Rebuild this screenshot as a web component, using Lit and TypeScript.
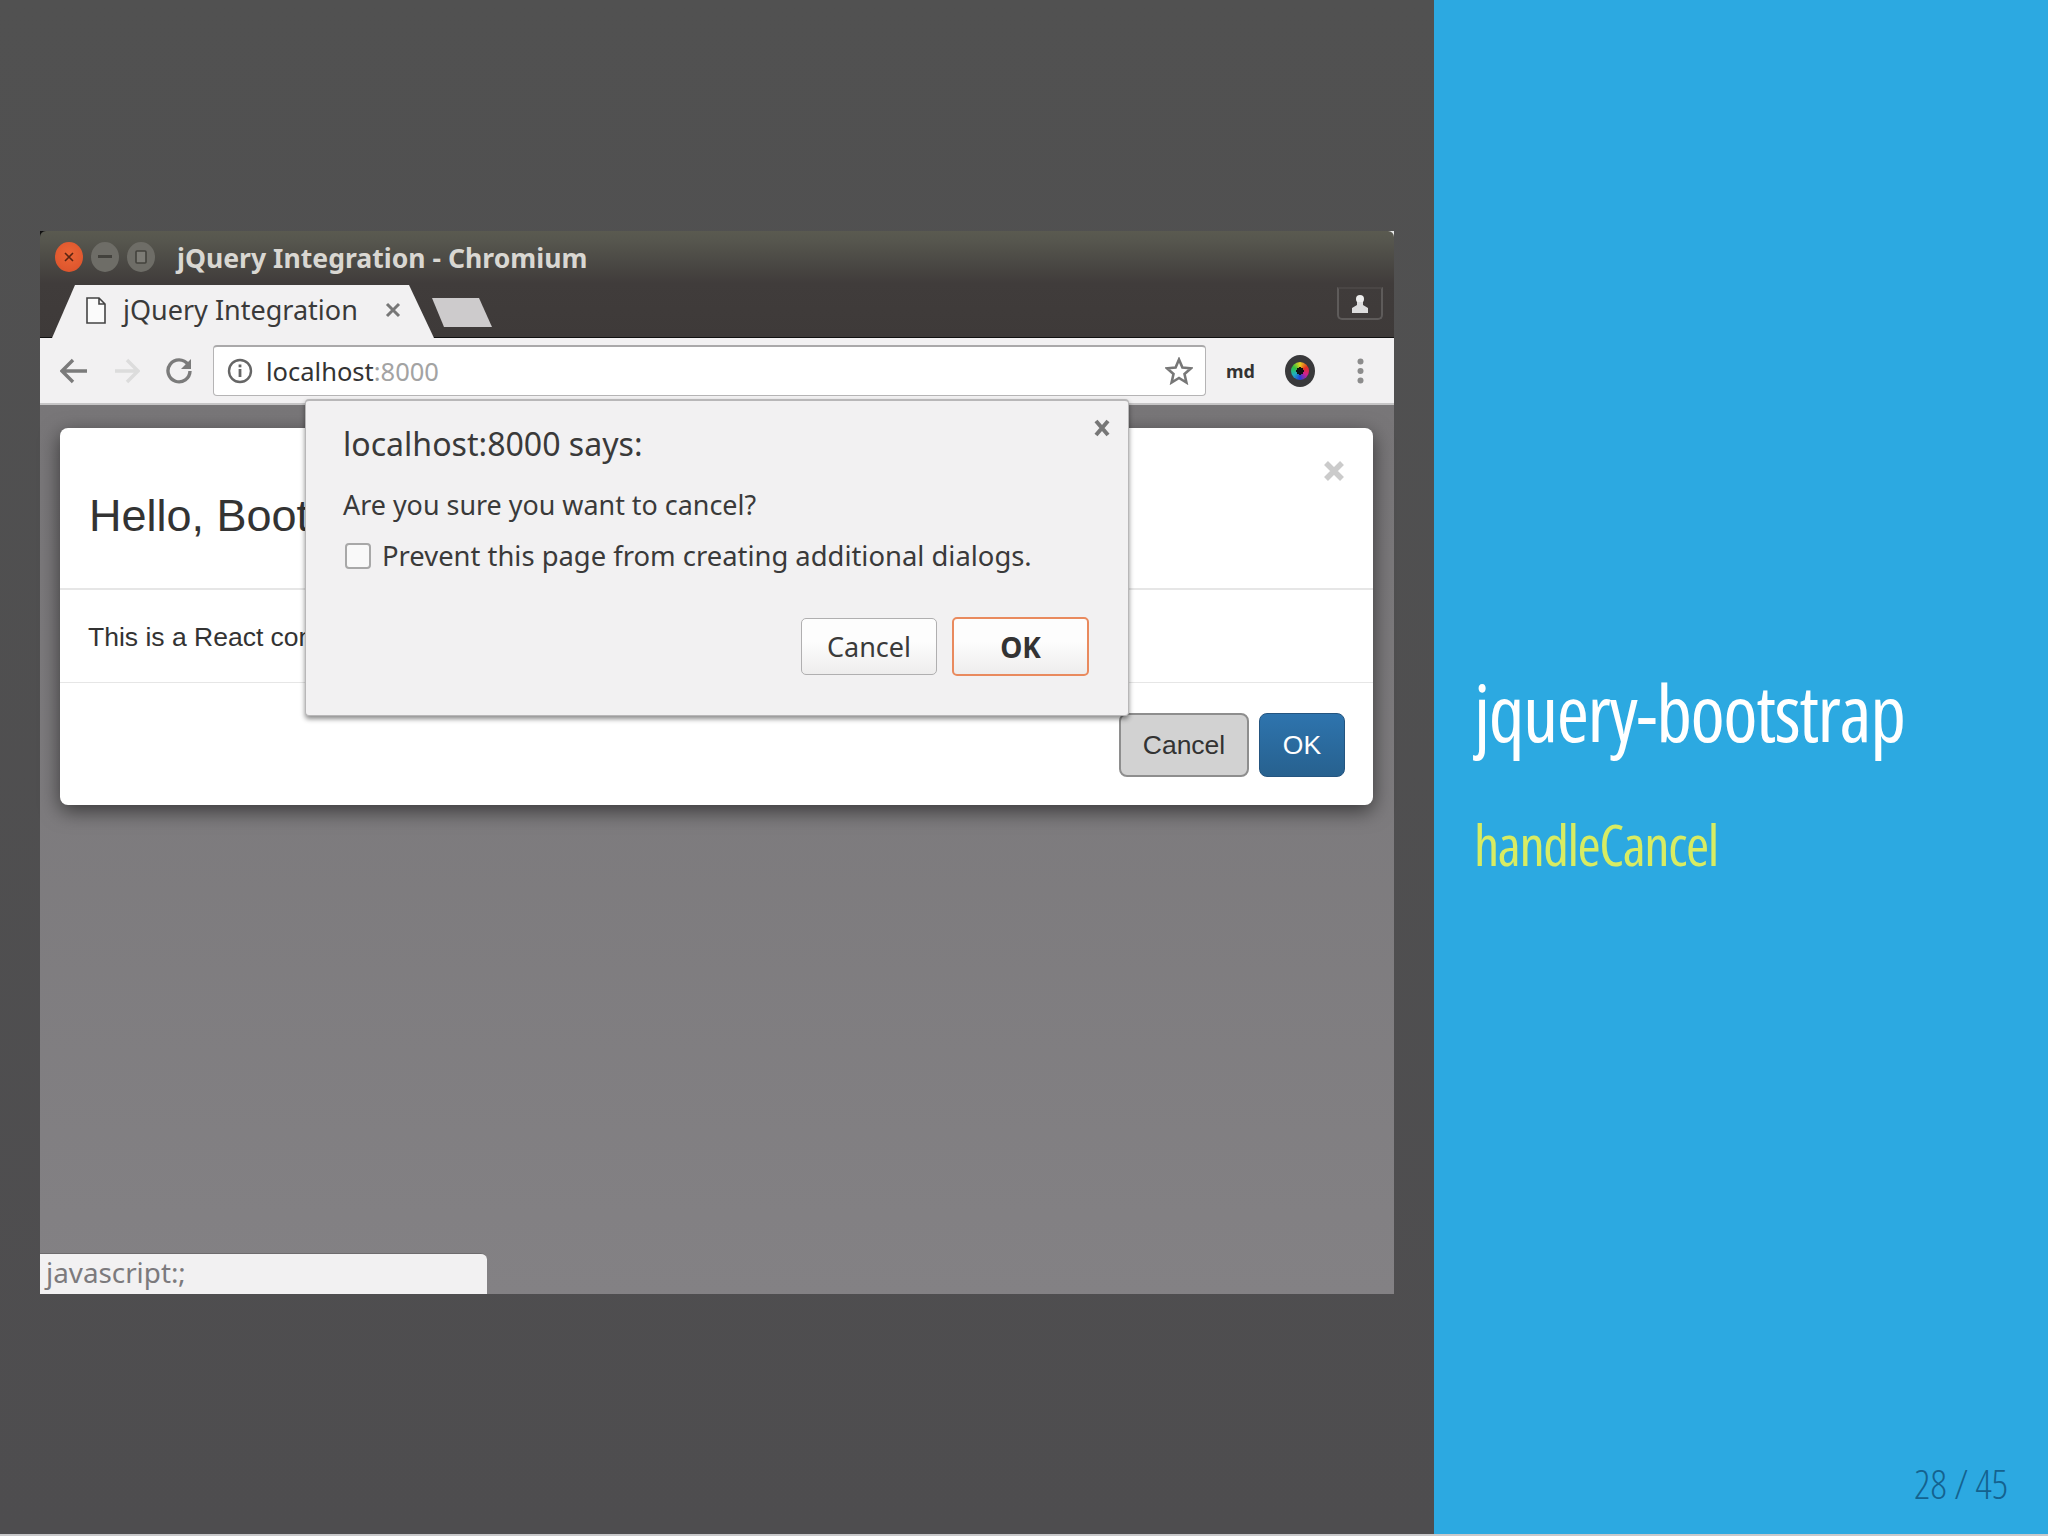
import { LitElement, html, css, svg } from "lit";
import { customElement } from "lit/decorators.js";

@customElement("app-root")
export class AppRoot extends LitElement {
  static styles = css`
    :host { display: block; width: 2048px; height: 1536px; overflow: hidden; font-family: "Noto Sans", sans-serif; background: #c9c9cb; }
    .slide { display: flex; width: 2048px; height: 1534px; }
    .left { width: 1434px; height: 1534px; box-sizing: border-box; padding: 231px 40px 0; background: linear-gradient(180deg,#515151,#4e4d4f); }
    .right { position: relative; flex: 1; height: 1534px; box-sizing: border-box; background: #2ca9e1; padding: 662px 0 0 40px; display: flex; flex-direction: column; }
    h1 { margin: 0; font: 400 78px/100px "Open Sans", sans-serif; font-stretch: 75%; letter-spacing: -1.45px; color: #fff; white-space: nowrap; }
    h2 { margin: 42px 0 0; font: 400 56px/80px "Open Sans", sans-serif; font-stretch: 75%; letter-spacing: -1.4px; color: #d8ec62; white-space: nowrap; }
    .pageno { position: absolute; right: 40px; bottom: 28px; font: 300 40px/44px "Open Sans", sans-serif; font-stretch: 75%; color: #14628f; white-space: nowrap; }

    .window { position: relative; width: 1354px; height: 1063px; display: flex; flex-direction: column; background: linear-gradient(90deg,#111 50%,#e8e8e8 50%); }
    .top { height: 106px; background: linear-gradient(180deg,#5a5a50 0,#56564e 10px,#403c3b 52px,#3e3a39 106px); border-radius: 6px 6px 0 0; display: flex; flex-direction: column; }
    .titlerow { height: 52px; display: flex; align-items: center; padding-left: 15px; }
    .light { width: 28px; height: 30px; border-radius: 50%; margin-right: 8px; display: flex; align-items: center; justify-content: center; background: #6e6d67; }
    .light.close { background: radial-gradient(circle at 50% 40%,#ec6636,#d9502a); }
    .light svg { display: block; }
    .wtitle { margin: 2px 0 0 14px; font-weight: 700; font-size: 26.6px; line-height: 34px; color: #d9d7d2; white-space: nowrap; }
    .tabrow { flex: 1; display: flex; align-items: flex-end; padding-left: 12px; position: relative; }
    .tab { width: 382px; height: 53px; margin-bottom: -1px; box-sizing: border-box; background: #f2f1f2; clip-path: polygon(0 100%, 23px 0, 357px 0, 100% 100%); display: flex; align-items: center; padding: 0 0 3px 34px; }
    .tabtext { margin-left: 17px; font-size: 27px; line-height: 34px; color: #3a3a3a; white-space: nowrap; width: 235px; }
    .tabx { margin-left: 27px; display: block; }
    .newtab { width: 60px; height: 29px; margin: 0 0 10px -2px; background: #cdcbcc; clip-path: polygon(0 0, 47px 0, 100% 100%, 12px 100%); }
    .profile { position: absolute; left: 1297px; top: 4px; width: 46px; height: 33px; box-sizing: border-box; border: 2px solid #5e5b5a; border-top-color: #4a4645; border-radius: 0 0 5px 5px; display: flex; align-items: center; justify-content: center; }

    .toolbar { height: 68px; box-sizing: border-box; border-top: 1px solid #111; border-bottom: 2px solid #c6c5c6; background: #f2f1f2; display: flex; align-items: center; padding-left: 20px; }
    .toolbar > svg { display: block; flex: none; }
    .fwd { margin-left: 26px; }
    .reload { margin-left: 25px; }
    .omni { width: 993px; height: 51px; margin-left: 20px; box-sizing: border-box; background: #fff; border: 1px solid #b5b4b5; border-top: 2px solid #aaa9aa; border-radius: 4px; display: flex; align-items: center; padding-left: 13px; }
    .host { margin-left: 13px; font-size: 25.5px; line-height: 36px; color: #333; white-space: nowrap; flex: 1; }
    .host span { color: #a3a3a3; }
    .star { margin-right: 12px; display: block; }
    .md { margin-left: 20px; width: 30px; font-weight: 700; font-size: 18px; color: #333; white-space: nowrap; }
    .wheel { margin-left: 29px; width: 30px; height: 32px; flex: none; border-radius: 50%; background: #39393b; display: flex; align-items: center; justify-content: center; }
    .ring { width: 18px; height: 18px; border-radius: 50%; background: radial-gradient(circle, #111 0 28%, transparent 30%), conic-gradient(#e8d020, #e63020, #d02090, #2040d8, #20b0c0, #30c040, #e8d020); }
    .kebab { margin-left: 42px; }

    .content { position: relative; flex: 1; background: linear-gradient(180deg,#787678,#838184); padding: 23px 21px 0 20px; }
    .modal { height: 377px; background: #fff; border-radius: 8px; box-shadow: 0 6px 20px rgba(0,0,0,.55); display: flex; flex-direction: column; font-family: "Liberation Sans", sans-serif; color: #333; }
    .mhead { position: relative; height: 142px; padding: 17px 0 1px 29px; border-bottom: 2px solid #e6e6e6; display: flex; align-items: center; font-size: 45px; line-height: 60px; white-space: nowrap; overflow: hidden; }
    .mhead svg { position: absolute; right: 28px; top: 32px; }
    .mbody { height: 93px; padding: 2px 0 0 28px; box-sizing: border-box; border-bottom: 1px solid #e6e6e6; display: flex; align-items: center; font-size: 26.5px; white-space: nowrap; overflow: hidden; }
    .mfoot { flex: 1; display: flex; justify-content: flex-end; gap: 10px; padding: 30px 28px 0 0; }
    .btn { box-sizing: border-box; height: 64px; border-radius: 8px; display: flex; align-items: center; justify-content: center; font-size: 26.5px; }
    .btn.c { width: 130px; background: #d2d2d2; border: 2px solid #8e8e8e; color: #333; }
    .btn.o { width: 86px; background: linear-gradient(180deg,#2e74ae,#27618f); border: 1px solid #245580; color: #fff; }

    .dialog { position: absolute; left: 265px; top: -6px; width: 824px; height: 317px; box-sizing: border-box; background: #f2f1f2; border: 2px solid #b8b7b8; border-width: 2px 1px 1px 1px; border-radius: 4px; box-shadow: 0 3px 5px rgba(0,0,0,.45); padding: 23px 39px 0 37px; color: #3a3a3a; display: flex; flex-direction: column; }
    .dialog > svg { position: absolute; right: 17px; top: 18px; }
    .dtitle { font-size: 32.1px; line-height: 40px; white-space: nowrap; }
    .dmsg { margin-top: 23px; font-size: 26.9px; line-height: 36px; white-space: nowrap; }
    .dcheck { margin-top: 15px; display: flex; align-items: center; font-size: 27.4px; line-height: 36px; white-space: nowrap; }
    .box { width: 26px; height: 26px; box-sizing: border-box; margin: 0 11px 0 2px; background: #f9f9f9; border: 2px solid #a8a8a8; border-radius: 4px; }
    .dbtns { margin-top: auto; margin-bottom: 39px; display: flex; justify-content: flex-end; gap: 15px; align-items: center; }
    .dbtn { box-sizing: border-box; display: flex; align-items: center; justify-content: center; font-size: 27px; border-radius: 5px; background: linear-gradient(180deg,#fdfdfd 40%,#eeeded); }
    .dbtn.c { width: 136px; height: 57px; border: 1px solid #b0afb0; color: #3a3a3a; }
    .dbtn.o { width: 137px; height: 59px; border: 2px solid #e98a5e; font-weight: 700; font-size: 28px; color: #333; }

    .status { position: absolute; left: 0; bottom: 0; width: 447px; height: 41px; box-sizing: border-box; background: #f2f1f2; border-top: 1px solid #6d6b6d; border-radius: 0 6px 0 0; padding-left: 6px; font-size: 27.8px; line-height: 37px; color: #7c7a7d; white-space: nowrap; }
  `;

  render() {
    return html`
      <div class="slide">
        <div class="left">
          <div class="window">
            <div class="top">
              <div class="titlerow">
                <div class="light close"><svg width="12" height="12" viewBox="0 0 12 12"><path d="M2 2 10 10M10 2 2 10" stroke="#5a2412" stroke-width="1.6"/></svg></div>
                <div class="light"><svg width="14" height="4" viewBox="0 0 14 4"><rect width="14" height="3" fill="#43423d"/></svg></div>
                <div class="light"><svg width="12" height="14" viewBox="0 0 12 14"><rect x="1" y="1" width="10" height="12" rx="1" fill="#7d7c76" stroke="#43423d" stroke-width="1.6"/></svg></div>
                <div class="wtitle">jQuery Integration - Chromium</div>
              </div>
              <div class="tabrow">
                <div class="tab">
                  <svg width="20" height="27" viewBox="0 0 20 27"><path d="M1 1H13L19 7V26H1Z M13 1V7H19" fill="#fbfbfb" stroke="#444" stroke-width="1.6"/></svg>
                  <div class="tabtext">jQuery Integration</div>
                  ${svg`<svg class="tabx" width="16" height="16" viewBox="0 0 16 16"><path d="M2 2 14 14M14 2 2 14" stroke="#777" stroke-width="3"/></svg>`}
                </div>
                <div class="newtab"></div>
                <div class="profile">
                  <svg width="18" height="20" viewBox="0 0 18 20"><circle cx="9" cy="5" r="4" fill="#eee"/><path d="M6 8h6v3l5 3v5H1v-5l5-3Z" fill="#ddd"/></svg>
                </div>
              </div>
            </div>
            <div class="toolbar">
              <svg width="28" height="26" viewBox="0 0 28 26"><path d="M27 13H3M13 2 2 13l11 11" fill="none" stroke="#7b7b7b" stroke-width="3.4"/></svg>
              <svg class="fwd" width="26" height="26" viewBox="0 0 26 26"><path d="M1 13H23M13 2l11 11-11 11" fill="none" stroke="#dcdcdc" stroke-width="3.4"/></svg>
              <svg class="reload" width="28" height="28" viewBox="0 0 28 28"><path d="M23 7.5A11 11 0 1 0 25 14" fill="none" stroke="#7b7b7b" stroke-width="3.4"/><path d="M26 2V12H16Z" fill="#7b7b7b"/></svg>
              <div class="omni">
                <svg width="26" height="26" viewBox="0 0 26 26"><circle cx="13" cy="13" r="11" fill="none" stroke="#666" stroke-width="2.4"/><rect x="11.6" y="11" width="2.8" height="8" fill="#666"/><rect x="11.6" y="6.5" width="2.8" height="2.8" fill="#666"/></svg>
                <div class="host">localhost<span>:8000</span></div>
                <svg class="star" width="28" height="28" viewBox="0 0 28 28"><path d="M14 2.5 17.4 10.6 26 11.3 19.5 17 21.4 25.5 14 21 6.6 25.5 8.5 17 2 11.3 10.6 10.6Z" fill="none" stroke="#777" stroke-width="2.6"/></svg>
              </div>
              <div class="md">md</div>
              <div class="wheel"><div class="ring"></div></div>
              <svg class="kebab" width="7" height="26" viewBox="0 0 7 26"><circle cx="3.5" cy="3.5" r="3" fill="#8c8c8c"/><circle cx="3.5" cy="13" r="3" fill="#8c8c8c"/><circle cx="3.5" cy="22.5" r="3" fill="#8c8c8c"/></svg>
            </div>
            <div class="content">
              <div class="modal">
                <div class="mhead">Hello, Bootstrap!<svg width="22" height="22" viewBox="0 0 22 22"><path d="M3 3 19 19M19 3 3 19" stroke="#cbcbcb" stroke-width="5.5"/></svg></div>
                <div class="mbody">This is a React component</div>
                <div class="mfoot">
                  <div class="btn c">Cancel</div>
                  <div class="btn o">OK</div>
                </div>
              </div>
              <div class="dialog">
                <svg width="18" height="18" viewBox="0 0 18 18"><path d="M3 2 15 16M15 2 3 16" stroke="#777" stroke-width="4"/></svg>
                <div class="dtitle">localhost:8000 says:</div>
                <div class="dmsg">Are you sure you want to cancel?</div>
                <div class="dcheck"><div class="box"></div>Prevent this page from creating additional dialogs.</div>
                <div class="dbtns">
                  <div class="dbtn c">Cancel</div>
                  <div class="dbtn o">OK</div>
                </div>
              </div>
              <div class="status">javascript:;</div>
            </div>
          </div>
        </div>
        <div class="right">
          <h1>jquery-bootstrap</h1>
          <h2>handleCancel</h2>
          <div class="pageno">28 / 45</div>
        </div>
      </div>
    `;
  }
}
